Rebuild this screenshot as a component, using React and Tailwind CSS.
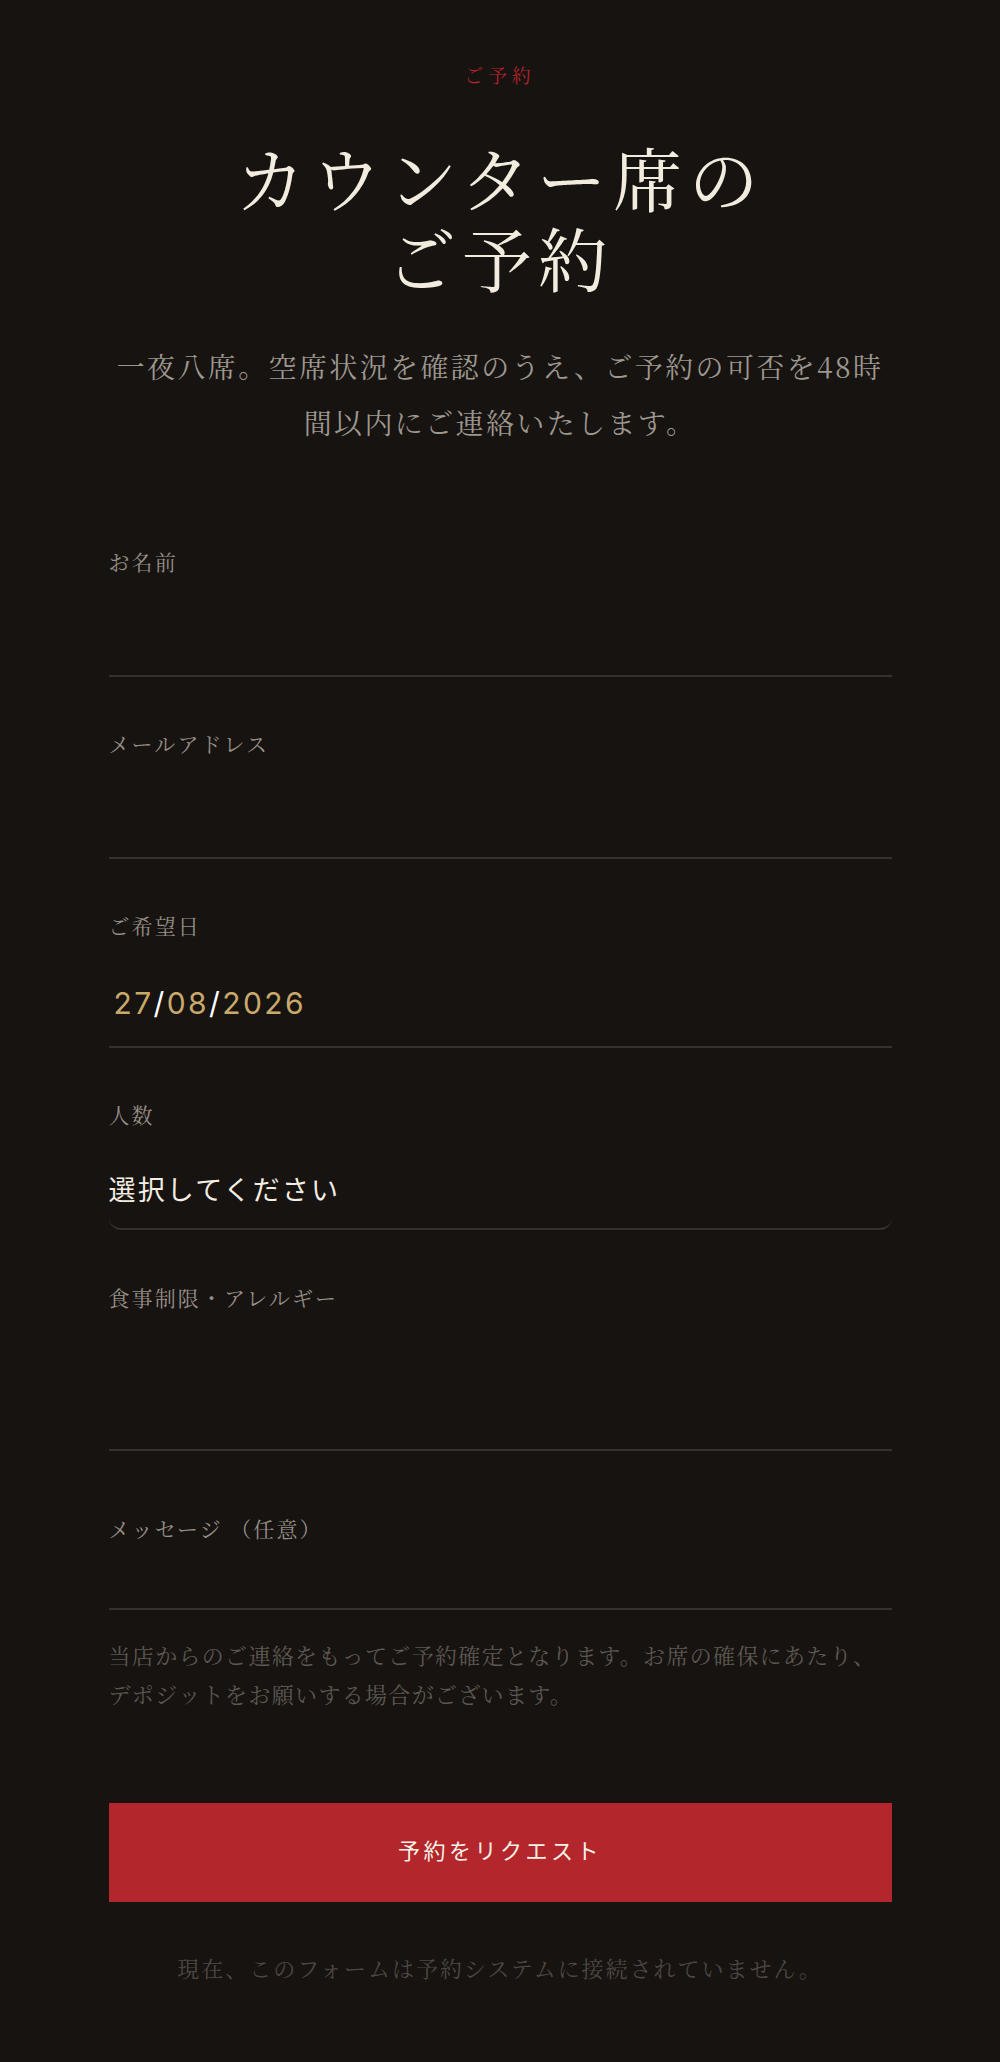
import React from 'react';

const serif = "font-['Noto_Serif_CJK_JP','Noto_Serif_JP','Noto_Serif_CJK_SC',serif]";
const sans = "font-['Noto_Sans_CJK_JP',sans-serif]";

function Label({ children }) {
    return (
        <label className={`block text-[21px] leading-[24px] tracking-[0.1em] text-[#968f86] ${serif}`}>
            {children}
        </label>
    );
}

function Field({ label, height, className = '', children }) {
    return (
        <div className={`flex flex-col ${className}`}>
            <Label>{label}</Label>
            <div className={`flex items-center border-b-2 border-[#35312d] ${height}`}>
                {children}
            </div>
        </div>
    );
}

export default function App() {
    return (
        <div className="min-h-screen w-full bg-[#161311]">
            <div className="mx-auto flex w-[783px] flex-col pt-[61px] pb-[74px]">
                <p className={`text-center text-[19px] leading-[28px] tracking-[0.25em] text-[#b3242a] ${serif}`}>ご予約</p>

                <h1 className={`mt-[48px] text-center text-[70px] leading-[80px] tracking-[0.085em] text-[#f2ecdf] ${serif}`}>
                    カウンター席の<br />ご予約
                </h1>

                <p className={`mt-[41px] text-center text-[28px] leading-[56px] tracking-[0.085em] text-[#9d978e] ${serif}`}>
                    一夜八席。空席状況を確認のうえ、ご予約の可否を48時間以内にご連絡いたします。
                </p>

                <form className="mt-[99px] flex flex-col gap-[54px]" onSubmit={(e) => e.preventDefault()}>
                    <Field label="お名前" height="h-[104px]" />
                    <Field label="メールアドレス" height="h-[104px]" />
                    <Field label="ご希望日" height="h-[111px] pt-[23px]">
                        <span className="pl-[5px] font-['Inter',sans-serif] text-[30px] tracking-[0.08em] text-[#c9a96b]">
                            27<span className="text-white">/</span>08<span className="text-white">/</span>2026
                        </span>
                    </Field>
                    <div className="flex flex-col">
                        <Label>人数</Label>
                        <div className="flex h-[104px] items-center rounded-b-[12px] border-b-2 border-[#35312d] pt-[24px]">
                            <span className={`text-[27px] tracking-[0.08em] text-[#f3ede2] ${sans}`}>選択してください</span>
                        </div>
                    </div>
                    <Field label="食事制限・アレルギー" height="h-[142px]" className="mt-[1px]" />
                    <Field label="メッセージ （任意）" height="h-[70px]" className="mt-[11px]" />
                </form>

                <p className={`mt-[25px] text-[22px] leading-[39px] tracking-[0.06em] text-[#5d5852] ${serif}`}>
                    当店からのご連絡をもってご予約確定となります。お席の確保にあたり、デポジットをお願いする場合がございます。
                </p>

                <button type="button" className={`mt-[90px] h-[99px] w-full bg-[#b3262b] pb-[6px] text-[22px] tracking-[0.16em] text-[#f6f0e7] ${sans}`}>
                    予約をリクエスト
                </button>

                <p className={`mt-[46px] text-center text-[22px] leading-[39px] tracking-[0.09em] text-[#4d4843] ${serif}`}>
                    現在、このフォームは予約システムに接続されていません。
                </p>
            </div>
        </div>
    );
}
